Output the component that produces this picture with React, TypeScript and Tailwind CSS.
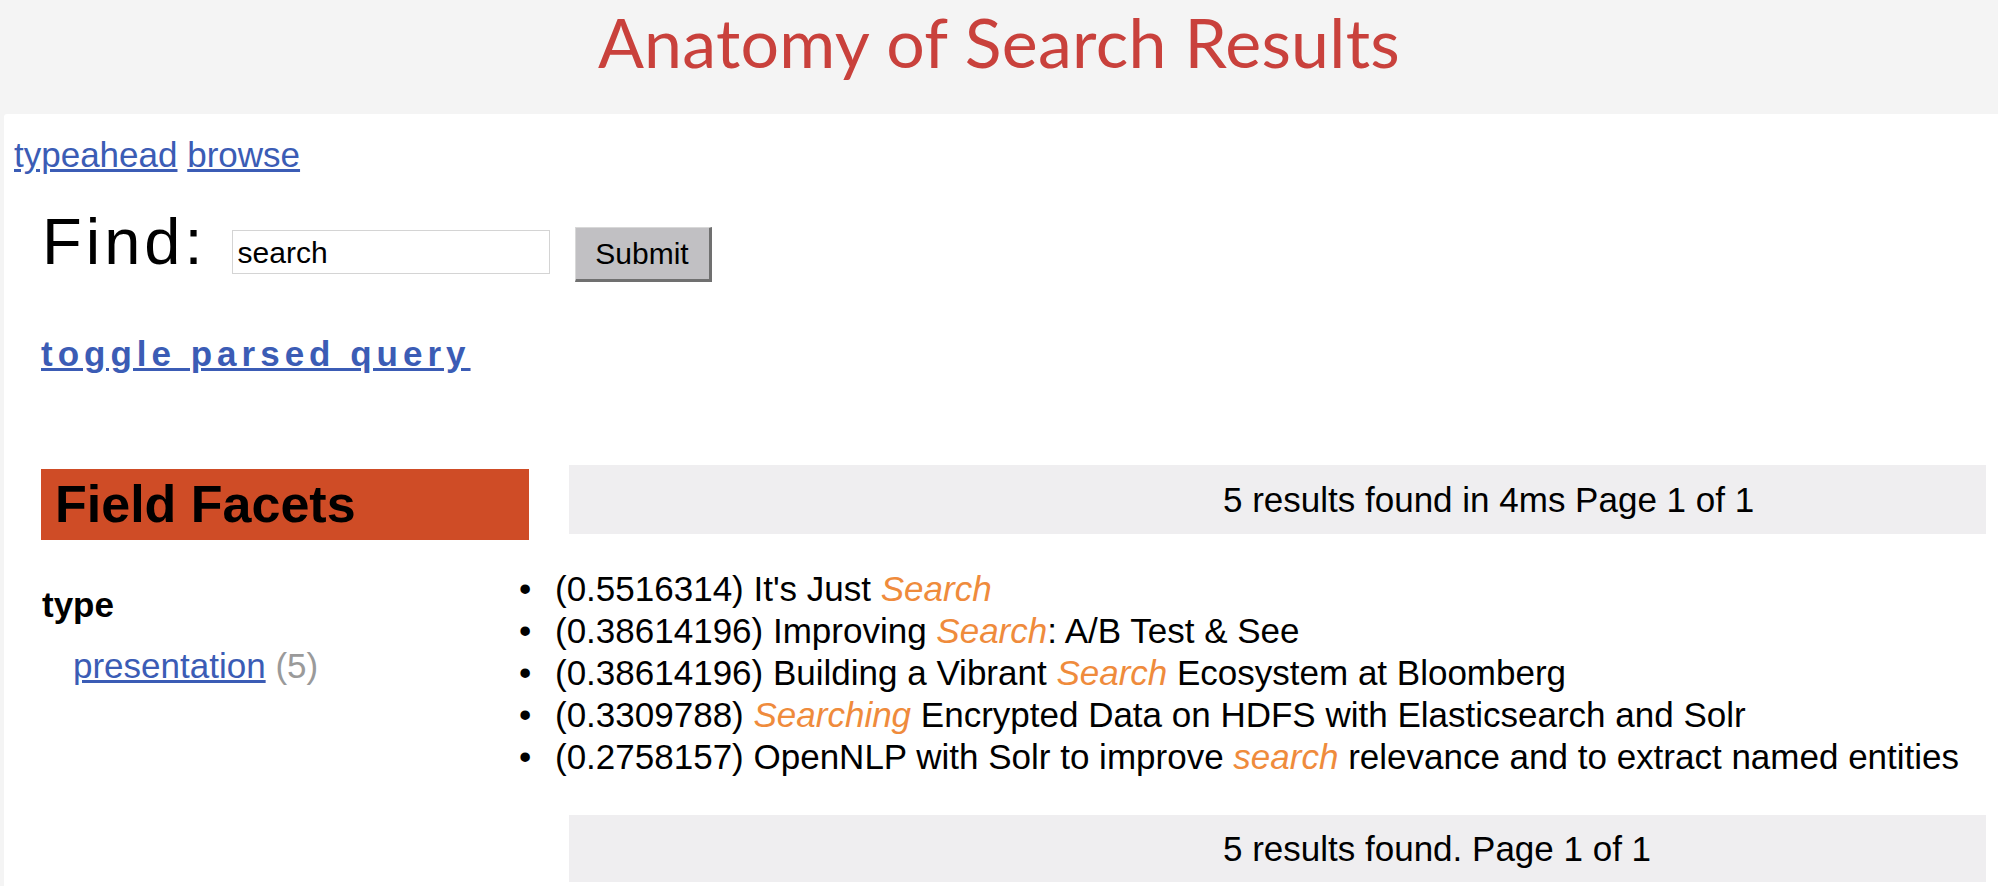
import React from "react";

const Hl = ({ children }: { children: React.ReactNode }) => (
  <em className="italic text-[#ef8b3c]">{children}</em>
);

export default function App() {
  const results: React.ReactNode[] = [
    <>(0.5516314) It's Just <Hl>Search</Hl></>,
    <>(0.38614196) Improving <Hl>Search</Hl>: A/B Test &amp; See</>,
    <>(0.38614196) Building a Vibrant <Hl>Search</Hl> Ecosystem at Bloomberg</>,
    <>(0.3309788) <Hl>Searching</Hl> Encrypted Data on HDFS with Elasticsearch and Solr</>,
    <>(0.2758157) OpenNLP with Solr to improve <Hl>search</Hl> relevance and to extract named entities</>,
  ];

  return (
    <div className="w-[1998px] h-[886px] overflow-hidden bg-[#f4f4f4] font-['Liberation_Sans',Arial,sans-serif] text-black">
      <header className="h-[114px] flex justify-center">
        <h1 className="mt-[8px] text-[68px] leading-none tracking-[0.3px] text-[#c9413c] font-['Lato',sans-serif] font-normal">
          Anatomy of Search Results
        </h1>
      </header>
      <main className="ml-[4px] bg-white h-[772px] pt-[21px] pr-[12px] rounded-tl-[3px]">
        <nav className="pl-[10px] text-[35px] leading-[40px] text-[#3b5cb5]">
          <a href="#" className="underline">typeahead</a> <a href="#" className="underline">browse</a>
        </nav>

        <div className="mt-[34px] ml-[38px] flex items-start h-[73px]">
          <span className="text-[65px] leading-[65px] tracking-[4px]">Find:</span>
          <input
            defaultValue="search"
            className="ml-[25px] mt-[21px] w-[318px] h-[44px] border border-[#d4d4d4] px-[5px] text-[30px] outline-none bg-white"
          />
          <button className="ml-[25px] mt-[18px] w-[137px] h-[55px] bg-[#c1c0c3] border-t border-l border-t-[#d8d8d8] border-l-[#d8d8d8] border-r-[3px] border-b-[3px] border-r-[#707070] border-b-[#707070] text-[30px] leading-none">
            Submit
          </button>
        </div>

        <div className="mt-[52px] ml-[37px] text-[35px] leading-[40px] font-bold tracking-[5px] text-[#3b5cb5]">
          <a href="#" className="underline">toggle parsed query</a>
        </div>

        <section className="mt-[91px] flex">
          <div className="w-[525px] shrink-0 pl-[37px]">
            <h2 className="mt-[4px] h-[71px] w-[488px] bg-[#cf4c26] pl-[14px] text-[52px] font-bold leading-[71px]">
              Field Facets
            </h2>
            <div className="mt-[45px] ml-[1px] text-[35px] font-bold leading-[40px]">type</div>
            <div className="mt-[21px] pl-[32px] text-[35px] leading-[40px]">
              <a href="#" className="underline text-[#3b5cb5]">presentation</a>{" "}
              <span className="text-[#9a9a9a]">(5)</span>
            </div>
          </div>

          <div className="flex-1 min-w-0">
            <div className="ml-[40px] h-[69px] bg-[#efeef0] pl-[654px] text-[35px] leading-[69px] whitespace-nowrap">
              5 results found in 4ms Page 1 of 1
            </div>
            <ul className="mt-[34px] ml-[-10px] text-[35px] leading-[42px]">
              {results.map((r, i) => (
                <li key={i} className="flex whitespace-nowrap">
                  <span className="w-[36px] shrink-0">•</span>
                  <span>{r}</span>
                </li>
              ))}
            </ul>
            <div className="mt-[37px] ml-[40px] h-[67px] bg-[#efeef0] pl-[654px] text-[35px] leading-[67px] whitespace-nowrap">
              5 results found. Page 1 of 1
            </div>
          </div>
        </section>
      </main>
    </div>
  );
}
